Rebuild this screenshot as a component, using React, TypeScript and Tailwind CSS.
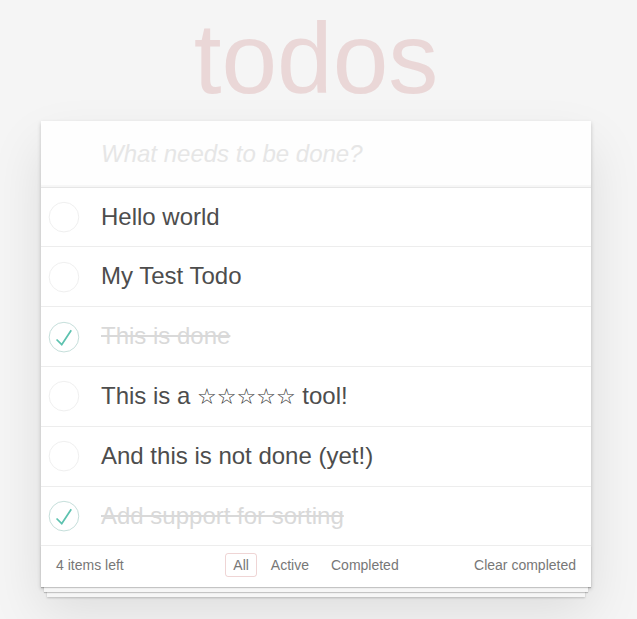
import React from "react";

type Todo = { title: React.ReactNode; completed: boolean };

const todos: Todo[] = [
  { title: "Hello world", completed: false },
  { title: "My Test Todo", completed: false },
  { title: "This is done", completed: true },
  {
    title: (
      <>
        This is a{" "}
        <span className="font-['DejaVu_Sans',sans-serif] text-[22px] text-[#333]">☆☆☆☆☆</span>{" "}
        tool!
      </>
    ),
    completed: false,
  },
  { title: "And this is not done (yet!)", completed: false },
  { title: "Add support for sorting", completed: true },
];

function Toggle({ checked }: { checked: boolean }) {
  return (
    <svg width="40" height="40" viewBox="-10 -18 100 135" className="shrink-0 block">
      <circle
        cx="50"
        cy="50"
        r="50"
        fill="none"
        stroke={checked ? "#bddad5" : "#ededed"}
        strokeWidth="3"
      />
      {checked && <path fill="#5dc2af" d="M72 25L42 71 27 56l-4 4 20 20 34-52z" />}
    </svg>
  );
}

export default function App() {
  return (
    <div className="min-h-screen bg-[#f5f5f5] font-['Liberation_Sans',Arial,sans-serif] text-[14px] text-[#4d4d4d] leading-[1.4em]">
      <div className="w-[550px] ml-[41px] pt-[8px]">
        <h1 className="h-[100px] text-center text-[100px] leading-[100px] font-thin text-[rgba(175,47,47,0.15)]">
          todos
        </h1>
        <div className="mt-[13px] bg-white relative shadow-[0_2px_4px_0_rgba(0,0,0,0.2),0_25px_50px_0_rgba(0,0,0,0.1)]">
          <input
            className="block w-full pl-[60px] pr-[16px] py-[16px] text-[24px] leading-[1.4em] text-[#4d4d4d] bg-[rgba(0,0,0,0.003)] shadow-[inset_0_-2px_1px_rgba(0,0,0,0.03)] outline-none placeholder:italic placeholder:text-[#e6e6e6]"
            placeholder="What needs to be done?"
          />
          <section className="border-t border-[#e6e6e6]">
            <ul>
              {todos.map((t, i) => (
                <li key={i} className="flex items-center border-b border-[#ededed] text-[24px]">
                  <Toggle checked={t.completed} />
                  <label
                    className={
                      "block pl-[20px] pr-[15px] py-[15px] leading-[1.2] " +
                      (t.completed ? "text-[#d9d9d9] line-through" : "text-[#4d4d4d]")
                    }
                  >
                    {t.title}
                  </label>
                </li>
              ))}
            </ul>
          </section>
          <footer className="relative grid grid-cols-[1fr_auto_1fr] items-center h-[41px] px-[15px] pb-[3px] bg-white text-[#777] shadow-[0_1px_1px_rgba(0,0,0,0.2),0_8px_0_-3px_#f6f6f6,0_9px_1px_-3px_rgba(0,0,0,0.2),0_16px_0_-6px_#f6f6f6,0_17px_2px_-6px_rgba(0,0,0,0.2)]">
            <span className="leading-[20px]">
              <strong className="font-normal">4</strong> items left
            </span>
            <ul className="flex -mt-[1px]">
              <li>
                <a className="block m-[3px] px-[7px] py-[3px] leading-[16px] border border-[rgba(175,47,47,0.2)] rounded-[3px]">
                  All
                </a>
              </li>
              <li>
                <a className="block m-[3px] px-[7px] py-[3px] leading-[16px] border border-transparent rounded-[3px]">
                  Active
                </a>
              </li>
              <li>
                <a className="block m-[3px] px-[7px] py-[3px] leading-[16px] border border-transparent rounded-[3px]">
                  Completed
                </a>
              </li>
            </ul>
            <span className="justify-self-end leading-[20px]">Clear completed</span>
          </footer>
        </div>
      </div>
    </div>
  );
}
